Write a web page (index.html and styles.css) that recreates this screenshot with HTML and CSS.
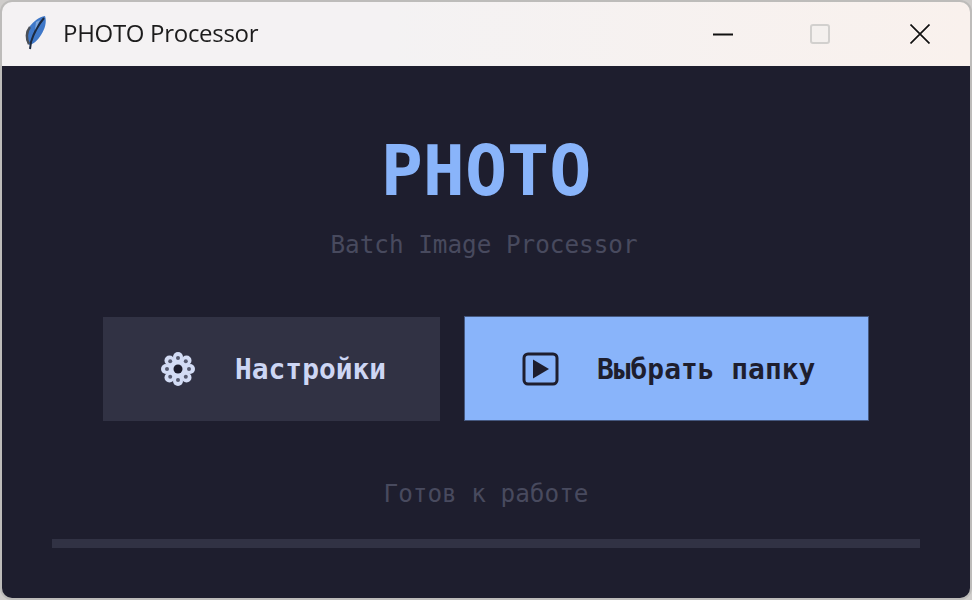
FILE: index.html
```html
<!DOCTYPE html>
<html lang="en">
<head>
    <meta charset="UTF-8">
    <meta name="viewport" content="width=device-width, initial-scale=1.0">
    <title>PHOTO Processor</title>
    <link rel="stylesheet" href="styles.css">
</head>
<body>
    <div class="window">
        <div class="titlebar">
            <svg class="app-icon" width="24" height="36" viewBox="0 0 24 36">
                <path d="M6 30 C2 25 3 17 7 11 C11 6 16 2 22 1 C24 7 22 14 18 20 C15 25 11 29 6 30 Z" fill="#3f78c8"/>
                <path d="M21 3 C16 9 11 17 8 27 L7 34" fill="none" stroke="#1c2a40" stroke-width="2"/>
                <path d="M6 29 C3 24 3 17 7 12" fill="none" stroke="#4a5058" stroke-width="2.5"/>
                <path d="M13 7 L17 5 L12 15 Z" fill="#7fa8dc"/>
            </svg>
            <span class="window-title">PHOTO Processor</span>
            <div class="window-controls">
                <div class="control control-min">
                    <svg width="20" height="20" viewBox="0 0 20 20"><path d="M0 10.5 H20" stroke="#111" stroke-width="2"/></svg>
                </div>
                <div class="control">
                    <svg width="20" height="20" viewBox="0 0 20 20"><rect x="1" y="1" width="18" height="18" rx="2" fill="#f4f0ee" stroke="#d2d0ce" stroke-width="2"/></svg>
                </div>
                <div class="control">
                    <svg width="20" height="20" viewBox="0 0 20 20"><path d="M0.5 0.5 L19.5 19.5 M19.5 0.5 L0.5 19.5" stroke="#111" stroke-width="1.7"/></svg>
                </div>
            </div>
        </div>

        <div class="content">
            <h1 class="logo">PHOTO</h1>
            <p class="subtitle">Batch Image Processor</p>

            <div class="actions">
                <button class="button button-settings">
                    <svg width="38" height="36" viewBox="0 0 38 36">
                        <g fill="#d3dcf5">
                            <circle cx="19" cy="6" r="5"/>
                            <circle cx="27.5" cy="9.5" r="5"/>
                            <circle cx="31" cy="18" r="5"/>
                            <circle cx="27.5" cy="26.5" r="5"/>
                            <circle cx="19" cy="30" r="5"/>
                            <circle cx="10.5" cy="26.5" r="5"/>
                            <circle cx="7" cy="18" r="5"/>
                            <circle cx="10.5" cy="9.5" r="5"/>
                            <circle cx="19" cy="18" r="11"/>
                        </g>
                        <g fill="#565a70">
                            <circle cx="19" cy="7" r="2"/>
                            <circle cx="26.8" cy="10.2" r="2"/>
                            <circle cx="30" cy="18" r="2"/>
                            <circle cx="26.8" cy="25.8" r="2"/>
                            <circle cx="19" cy="29" r="2"/>
                            <circle cx="11.2" cy="25.8" r="2"/>
                            <circle cx="8" cy="18" r="2"/>
                            <circle cx="11.2" cy="10.2" r="2"/>
                        </g>
                        <circle cx="19" cy="18" r="4.5" fill="#1e1e2e"/>
                    </svg>
                    <span class="button-label">Настройки</span>
                </button>
                <button class="button button-primary">
                    <svg width="38" height="36" viewBox="0 0 38 36">
                        <rect x="2" y="3" width="33" height="30" rx="4" fill="none" stroke="#1e1e2e" stroke-width="3"/>
                        <path d="M11 8.5 L27 18 L11 27.5 Z" fill="#1e1e2e"/>
                    </svg>
                    <span class="button-label">Выбрать папку</span>
                </button>
            </div>

            <p class="status">Готов к работе</p>
            <div class="progress"></div>
        </div>
    </div>
</body>
</html>
```

FILE: styles.css
```css
html, body {
    margin: 0;
    padding: 0;
    background-color: #cfcdcb;
}
.window {
    width: 972px;
    height: 600px;
    box-sizing: border-box;
    padding: 2px;
    background-color: #bdbcba;
    border-radius: 12px;
    overflow: hidden;
    display: flex;
    flex-direction: column;
    filter: blur(0.4px);
}
.titlebar {
    height: 64px;
    flex-shrink: 0;
    display: flex;
    align-items: center;
    padding-left: 21px;
    background: linear-gradient(90deg, #f4f2f3 0%, #f4f2f3 40%, #f9f1ed 100%);
    border-radius: 10px 10px 0 0;
    font-family: "Open Sans", sans-serif;
}
.app-icon {
    flex-shrink: 0;
    margin-bottom: 2px;
}
.window-title {
    margin-left: 16px;
    margin-bottom: 4px;
    font-size: 24px;
    color: #1c1c1c;
    letter-spacing: -0.3px;
}
.window-controls {
    margin-left: auto;
    display: flex;
}
.control {
    width: 100px;
    height: 62px;
    display: flex;
    align-items: center;
    justify-content: center;
}
.control-min {
    width: 94px;
}
.content {
    flex: 1;
    display: flex;
    flex-direction: column;
    align-items: center;
    background-color: #1e1e2e;
    border-radius: 0 0 10px 10px;
    font-family: "DejaVu Sans Mono", monospace;
}
.logo {
    margin: 65px 0 0;
    height: 80px;
    line-height: 80px;
    font-size: 70px;
    font-weight: bold;
    color: #89b4fa;
}
.subtitle {
    margin: 19px 4px 0 0;
    height: 30px;
    line-height: 30px;
    font-size: 24.3px;
    color: #484a5e;
}
.actions {
    margin-top: 56px;
    display: flex;
    align-items: center;
    gap: 24px;
}
.button {
    display: flex;
    align-items: center;
    border: none;
    padding: 0;
    font-family: inherit;
    font-size: 27.9px;
    font-weight: bold;
}
.button-label {
    margin-top: 2px;
}
.button-settings {
    width: 337px;
    height: 104px;
    padding-left: 56px;
    gap: 38px;
    background-color: #313244;
    color: #cdd6f4;
}
.button-primary {
    width: 405px;
    height: 105px;
    padding-left: 57px;
    gap: 37px;
    background-color: #89b4fa;
    border: 1px solid #45587f;
    box-sizing: border-box;
    color: #1e1e2e;
}
.status {
    margin: 58px 0 0;
    height: 30px;
    line-height: 30px;
    font-size: 24.3px;
    color: #484a5e;
}
.progress {
    width: 868px;
    height: 9px;
    margin-top: 30px;
    background-color: #313244;
}
```
